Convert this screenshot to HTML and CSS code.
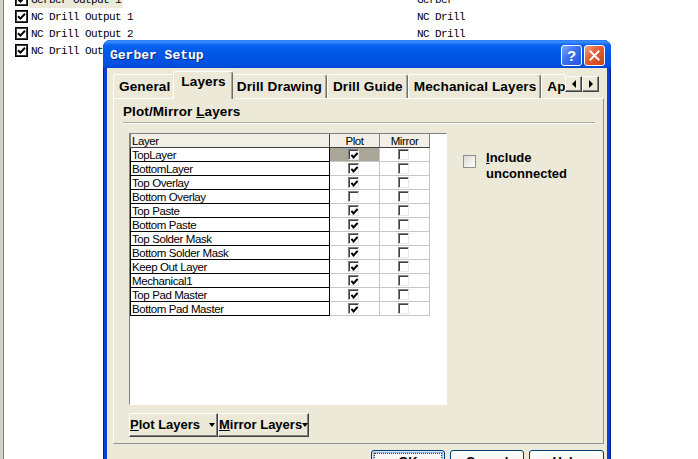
FILE: index.html
```html
<!DOCTYPE html>
<html>
<head>
<meta charset="utf-8">
<title>Gerber Setup</title>
<link rel="stylesheet" href="styles.css">
</head>
<body>
<div class="list">
  <div class="lrow"><span class="lchk"><svg width="9" height="9" viewBox="0 0 9 9"><path d="M1 4.2 L3.4 6.6 L8 1.8" fill="none" stroke="#000" stroke-width="2"/></svg></span><span class="lname"><span class="hl">Gerber Output 1</span></span><span class="ltype">Gerber</span></div>
  <div class="lrow"><span class="lchk"><svg width="9" height="9" viewBox="0 0 9 9"><path d="M1 4.2 L3.4 6.6 L8 1.8" fill="none" stroke="#000" stroke-width="2"/></svg></span><span class="lname">NC Drill Output 1</span><span class="ltype">NC Drill</span></div>
  <div class="lrow"><span class="lchk"><svg width="9" height="9" viewBox="0 0 9 9"><path d="M1 4.2 L3.4 6.6 L8 1.8" fill="none" stroke="#000" stroke-width="2"/></svg></span><span class="lname">NC Drill Output 2</span><span class="ltype">NC Drill</span></div>
  <div class="lrow"><span class="lchk"><svg width="9" height="9" viewBox="0 0 9 9"><path d="M1 4.2 L3.4 6.6 L8 1.8" fill="none" stroke="#000" stroke-width="2"/></svg></span><span class="lname">NC Drill Output 3</span><span class="ltype">NC Drill</span></div>
</div>

<div class="dialog">
  <div class="titlebar">
    <span class="title">Gerber Setup</span>
    <span class="tbtns">
      <span class="tb help">?</span>
      <span class="tb close"><svg width="13" height="13" viewBox="0 0 13 13"><path d="M2.5 2.5 L10.5 10.5 M10.5 2.5 L2.5 10.5" stroke="#fff" stroke-width="2" stroke-linecap="square"/></svg></span>
    </span>
  </div>
  <div class="client">
    <div class="tabstrip">
      <div class="tablist">
        <span class="tab">General</span>
        <span class="tab sel">Layers</span>
        <span class="tab">Drill Drawing</span>
        <span class="tab">Drill Guide</span>
        <span class="tab">Mechanical Layers</span>
        <span class="tab">Apertures</span>
      </div>
      <div class="tscroll">
        <span class="sbtn"><i class="al"></i></span>
        <span class="sbtn"><i class="ar"></i></span>
      </div>
    </div>
    <div class="panel">
      <div class="gtitle">Plot/Mirror <u>L</u>ayers</div>
      <div class="etch"></div>
      <div class="gbody">
        <div class="grid">
          <div class="grow hdr"><span class="c0">Layer</span><span class="c1">Plot</span><span class="c1">Mirror</span></div>
          <div class="grow"><span class="c0">TopLayer</span><span class="c1 sel"><span class="gc"><svg width="7" height="7" viewBox="0 0 7 7"><path d="M0.4 3 L2.5 5.4 L6.6 0.9" fill="none" stroke="#000" stroke-width="2"/></svg></span></span><span class="c1"><span class="gc"></span></span></div>
          <div class="grow"><span class="c0">BottomLayer</span><span class="c1"><span class="gc"><svg width="7" height="7" viewBox="0 0 7 7"><path d="M0.4 3 L2.5 5.4 L6.6 0.9" fill="none" stroke="#000" stroke-width="2"/></svg></span></span><span class="c1"><span class="gc"></span></span></div>
          <div class="grow"><span class="c0">Top Overlay</span><span class="c1"><span class="gc"><svg width="7" height="7" viewBox="0 0 7 7"><path d="M0.4 3 L2.5 5.4 L6.6 0.9" fill="none" stroke="#000" stroke-width="2"/></svg></span></span><span class="c1"><span class="gc"></span></span></div>
          <div class="grow"><span class="c0">Bottom Overlay</span><span class="c1"><span class="gc"></span></span><span class="c1"><span class="gc"></span></span></div>
          <div class="grow"><span class="c0">Top Paste</span><span class="c1"><span class="gc"><svg width="7" height="7" viewBox="0 0 7 7"><path d="M0.4 3 L2.5 5.4 L6.6 0.9" fill="none" stroke="#000" stroke-width="2"/></svg></span></span><span class="c1"><span class="gc"></span></span></div>
          <div class="grow"><span class="c0">Bottom Paste</span><span class="c1"><span class="gc"><svg width="7" height="7" viewBox="0 0 7 7"><path d="M0.4 3 L2.5 5.4 L6.6 0.9" fill="none" stroke="#000" stroke-width="2"/></svg></span></span><span class="c1"><span class="gc"></span></span></div>
          <div class="grow"><span class="c0">Top Solder Mask</span><span class="c1"><span class="gc"><svg width="7" height="7" viewBox="0 0 7 7"><path d="M0.4 3 L2.5 5.4 L6.6 0.9" fill="none" stroke="#000" stroke-width="2"/></svg></span></span><span class="c1"><span class="gc"></span></span></div>
          <div class="grow"><span class="c0">Bottom Solder Mask</span><span class="c1"><span class="gc"><svg width="7" height="7" viewBox="0 0 7 7"><path d="M0.4 3 L2.5 5.4 L6.6 0.9" fill="none" stroke="#000" stroke-width="2"/></svg></span></span><span class="c1"><span class="gc"></span></span></div>
          <div class="grow"><span class="c0">Keep Out Layer</span><span class="c1"><span class="gc"><svg width="7" height="7" viewBox="0 0 7 7"><path d="M0.4 3 L2.5 5.4 L6.6 0.9" fill="none" stroke="#000" stroke-width="2"/></svg></span></span><span class="c1"><span class="gc"></span></span></div>
          <div class="grow"><span class="c0">Mechanical1</span><span class="c1"><span class="gc"><svg width="7" height="7" viewBox="0 0 7 7"><path d="M0.4 3 L2.5 5.4 L6.6 0.9" fill="none" stroke="#000" stroke-width="2"/></svg></span></span><span class="c1"><span class="gc"></span></span></div>
          <div class="grow"><span class="c0">Top Pad Master</span><span class="c1"><span class="gc"><svg width="7" height="7" viewBox="0 0 7 7"><path d="M0.4 3 L2.5 5.4 L6.6 0.9" fill="none" stroke="#000" stroke-width="2"/></svg></span></span><span class="c1"><span class="gc"></span></span></div>
          <div class="grow"><span class="c0">Bottom Pad Master</span><span class="c1"><span class="gc"><svg width="7" height="7" viewBox="0 0 7 7"><path d="M0.4 3 L2.5 5.4 L6.6 0.9" fill="none" stroke="#000" stroke-width="2"/></svg></span></span><span class="c1"><span class="gc"></span></span></div>
        </div>
        <div class="incl">
          <span class="xpchk"></span>
          <span class="incl-t"><u>I</u>nclude<br>unconnected</span>
        </div>
      </div>
      <div class="gbtns">
        <span class="dbtn p"><span><u>P</u>lot Layers</span><i class="dd"></i></span>
        <span class="dbtn m"><span><u>M</u>irror Layers</span><i class="dd"></i></span>
      </div>
    </div>
    <div class="dlgbtns">
      <span class="xbtn def"><span class="focus">OK</span></span>
      <span class="xbtn">Cancel</span>
      <span class="xbtn help2">Help</span>
    </div>
  </div>
</div>
</body>
</html>
```

FILE: styles.css
```css
* { box-sizing: border-box; }
html, body { margin: 0; padding: 0; }
body {
  width: 698px;
  height: 459px;
  overflow: hidden;
  position: relative;
  background: linear-gradient(to right, #d4d0c8 0, #d4d0c8 3px, #808080 3px, #808080 4px, #fff 4px);
  font-family: "Liberation Sans", Arial, sans-serif;
  color: #000;
}

/* background list */
.list {
  margin-top: -9px;
  padding-left: 15px;
  font-family: "Liberation Mono", "DejaVu Sans Mono", monospace;
  font-size: 11px;
  letter-spacing: -0.6px;
}
.lrow { display: flex; align-items: center; height: 17px; }
.lchk {
  flex: none;
  width: 13px; height: 13px;
  border: 1px solid #000;
  box-shadow: inset 0 0 0 1px #3a3a3a;
  background: #fff;
  display: flex; align-items: center; justify-content: center;
}
.lname { flex: none; width: 386px; margin-left: 3px; line-height: 16px; white-space: nowrap; }
.hl { display: inline-block; background: #ece9d8; padding: 0 2px; margin-left: -2px; }
.ltype { white-space: nowrap; line-height: 16px; }

/* dialog window */
.dialog {
  position: absolute;
  left: 103px; top: 40px;
  width: 508px; height: 430px;
  background: #0a3ed6;
  border-radius: 8px 8px 0 0;
  box-shadow: inset 1px 0 0 #00209a, inset -1px 0 0 #00209a;
  display: flex; flex-direction: column;
}
.titlebar {
  flex: none;
  height: 28px;
  display: flex; align-items: flex-start;
  padding: 0 6px 0 7px;
  border-radius: 7px 7px 0 0;
  background: linear-gradient(#2a7af5 0, #3d8dff 2px, #0a62f0 5px, #0058e8 12px, #0055e5 60%, #0050dd 90%, #0046d0 100%);
}
.title {
  margin-top: 8px;
  font-family: "Liberation Mono", "DejaVu Sans Mono", monospace;
  font-weight: bold;
  font-size: 13px;
  line-height: 16px;
  color: #fff;
  text-shadow: 1px 1px 0 #0a2a8a;
}
.tbtns { margin-left: auto; margin-top: 5px; display: flex; gap: 2px; }
.tb {
  width: 21px; height: 21px;
  border: 1px solid #fff;
  border-radius: 3px;
  display: flex; align-items: center; justify-content: center;
}
.help {
  background: linear-gradient(135deg, #7fa8f7 0%, #3a6ff0 45%, #1f54d8 100%);
  color: #fff; font-weight: bold; font-size: 15px; line-height: 16px;
}
.close {
  background: linear-gradient(135deg, #f5a584 0%, #e4603a 40%, #cc4016 100%);
}

.client {
  flex: 1;
  margin: 0 4px;
  background: #ece9d8;
  padding: 2px 3px 0 6px;
  display: flex; flex-direction: column;
}

/* tabs */
.tabstrip {
  flex: none;
  display: flex;
  height: 29px;
  margin-bottom: -1px;
  position: relative;
  z-index: 1;
}
.tablist {
  flex: none;
  width: 452px;
  overflow: hidden;
  display: flex; align-items: flex-end;
}
.tab {
  flex: none;
  height: 24px;
  margin-bottom: 1px;
  padding: 4px 4px 0 5px;
  border-top: 1px solid #fff;
  border-left: 1px solid #fff;
  border-right: 1px solid #716f64;
  box-shadow: inset -1px 0 0 #aca899;
  border-radius: 3px 3px 0 0;
  background: #ece9d8;
  font-weight: bold;
  font-size: 13.6px;
  letter-spacing: 0.1px;
  line-height: 16px;
  white-space: nowrap;
}
.tab.sel {
  height: 28px;
  margin: 0 -2px;
  padding: 2px 6px 0 7px;
  position: relative;
  z-index: 2;
}
.tscroll { flex: none; display: flex; margin-top: 6px; align-self: flex-start; }
.sbtn {
  width: 17px; height: 16px;
  border: 1px solid;
  border-color: #fff #404040 #404040 #fff;
  box-shadow: inset -1px -1px 0 #808080;
  background: #ece9d8;
  display: flex; align-items: center; justify-content: center;
}
.al { width: 0; height: 0; border-top: 4px solid transparent; border-bottom: 4px solid transparent; border-right: 4px solid #000; }
.ar { width: 0; height: 0; border-top: 4px solid transparent; border-bottom: 4px solid transparent; border-left: 4px solid #000; }

/* panel */
.panel {
  flex: none;
  position: relative;
  height: 346px;
  border-top: 1px solid #fff;
  border-left: 1px solid #fff;
  border-right: 1px solid #919191;
  border-bottom: 1px solid #919191;
  padding: 5px 8px 0 9px;
}
.gtitle { font-weight: bold; font-size: 13.5px; letter-spacing: 0.1px; line-height: 16px; }
.etch { height: 2px; margin-top: 2px; border-top: 1px solid #aca899; border-bottom: 1px solid #fff; }
.gbody { display: flex; margin-top: 9px; padding-left: 6px; }

/* string grid */
.grid {
  flex: none;
  width: 318px; height: 272px;
  border: 1px solid;
  border-color: #808080 #fff #fff #808080;
  background: #fff;
  font-size: 11.5px;
  letter-spacing: -0.4px;
}
.grow { display: flex; height: 14px; }
.c0 {
  flex: none;
  width: 200px;
  border-left: 1px solid #000;
  border-right: 1px solid #000;
  border-bottom: 1px solid #000;
  padding: 1px 0 0 1px;
  line-height: 12px;
  white-space: nowrap;
  overflow: hidden;
}
.c1 {
  flex: none;
  width: 50px;
  border-right: 1px solid #c6c6c6;
  border-bottom: 1px solid #c6c6c6;
  display: flex; align-items: center; justify-content: center;
}
.c1.sel { background: #aaa699; }
.hdr .c0, .hdr .c1 { background: #f1efe6; }
.hdr .c0 { border-left-color: #808080; border-right-color: #404040; border-bottom-color: #404040; }
.hdr .c1 {
  border-right-color: #808080;
  border-bottom-color: #404040;
  padding-top: 1px;
  line-height: 12px;
  display: block;
  text-align: center;
}
.gc {
  width: 11px; height: 11px;
  margin-left: -2px;
  border: 1px solid;
  border-color: #808080 #e8e8e8 #e8e8e8 #808080;
  box-shadow: inset 1px 1px 0 #404040;
  background: #fff;
  display: flex; align-items: center; justify-content: center;
  padding: 1px 0 0 1px;
}

/* include checkbox */
.incl {
  display: flex; align-items: flex-start;
  margin: 17px 0 0 16px;
  font-weight: bold; font-size: 13px; line-height: 16px;
}
.xpchk {
  flex: none;
  width: 13px; height: 13px;
  margin: 5px 10px 0 0;
  border: 1px solid #8e8f8f;
  background: linear-gradient(135deg, #dcdcd5 0%, #eeeeea 55%, #fff 100%);
}

/* drop buttons */
.gbtns { display: flex; margin: 8px 0 0 6px; }
.dbtn {
  flex: none;
  height: 24px;
  display: flex; align-items: center; justify-content: space-between;
  border: 1px solid;
  border-color: #fff #404040 #404040 #fff;
  box-shadow: inset -1px -1px 0 #808080;
  padding: 0 2px 0 0;
  font-weight: bold; font-size: 13px; line-height: 16px;
  white-space: nowrap;
}
.dbtn.p { width: 89px; }
.dbtn.m { width: 91px; }
.dd {
  width: 0; height: 0;
  border-left: 3px solid transparent;
  border-right: 3px solid transparent;
  border-top: 4px solid #000;
}

/* dialog buttons */
.dlgbtns { display: flex; justify-content: flex-end; gap: 5px; margin-top: 6px; }
.xbtn {
  flex: none;
  width: 74px; height: 23px;
  border: 1px solid #003c74;
  border-radius: 3px;
  background: linear-gradient(#fff 0%, #f6f5f0 45%, #ebe9e0 85%, #d8d2c6 100%);
  font-weight: bold; font-size: 13px; line-height: 16px;
  text-align: center;
  padding-top: 3px;
}
.xbtn.help2 { width: 75px; }
.xbtn.def {
  padding: 2px;
  box-shadow: inset 0 0 0 1px #cee7ff, inset 0 0 0 2px #98b8ea;
}
.focus { display: block; height: 100%; border: 1px dotted #333; line-height: 15px; }
```
